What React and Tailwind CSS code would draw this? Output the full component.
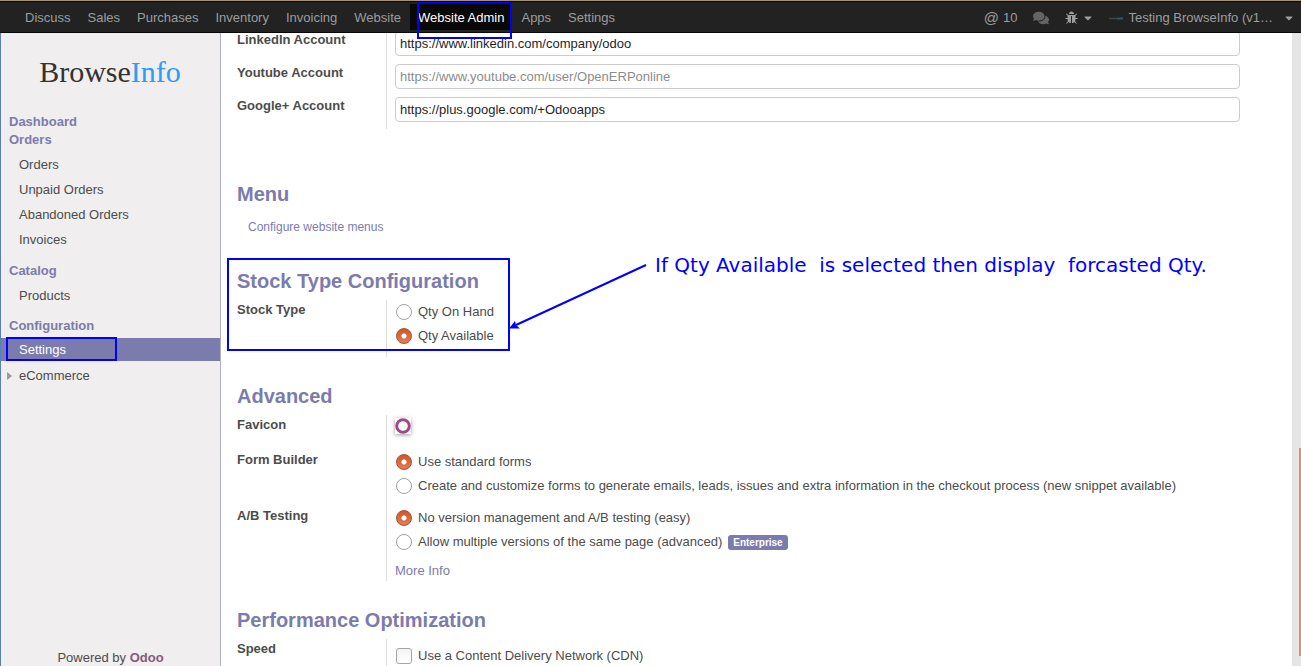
import { FaCaretDown, FaComments } from "react-icons/fa";

const navItems = ["Discuss", "Sales", "Purchases", "Inventory", "Invoicing", "Website", "Website Admin", "Apps", "Settings"];

function BugIcon() {
  return (
    <svg viewBox="0 0 1664 1792" className="h-[14px] w-[13px]" fill="currentColor" aria-hidden="true">
      <path d="M1632 960q0 26-19 45t-45 19h-224q0 171-67 290l208 209q19 19 19 45t-19 45q-18 19-45 19t-45-19l-198-197q-5 5-15 13t-42 28.500-65 36.500-82 29-97 13v-896h-128v896q-51 0-101.500-13.500t-87-33-66-39-43.500-32.500l-15-14-183 207q-20 21-48 21-24 0-43-16-19-18-20.500-44.500t15.500-46.500l202-227q-58-114-58-274h-224q-26 0-45-19t-19-45 19-45 45-19h224v-294l-173-173q-19-19-19-45t19-45 45-19 45 19l173 173h844l173-173q19-19 45-19t45 19 19 45-19 45l-173 173v294h224q26 0 45 19t19 45zm-480-576h-640q0-133 93.500-226.500t226.500-93.500 226.500 93.500 93.500 226.500z" />
    </svg>
  );
}

function NavBar() {
  return (
    <header className="relative z-10 h-[33px] shrink-0 border-t border-[#a8946a] bg-[#222222]">
      <div className="flex h-full items-center justify-between border-y border-[#060606] pr-1.5 pl-[17px] text-[#9d9d9d]">
        <nav className="flex h-full items-center gap-px">
          {navItems.map((item) => {
            const active = item === "Website Admin";
            return (
              <a
                key={item}
                href={"#" + item.toLowerCase().replace(" ", "-")}
                className={
                  active
                    ? "relative flex h-[26px] items-center bg-[#080808] px-2 pt-1.5 pb-1 text-white"
                    : "flex h-[26px] items-center px-2 pt-1.5 pb-1"
                }
              >
                {item}
                {active && <span className="pointer-events-none absolute -top-0.5 left-[7px] h-[37px] w-[95px] border-2 border-[#0000ff]" />}
              </a>
            );
          })}
        </nav>
        <div className="flex items-center pt-0.5">
          <button type="button" aria-label="Mentions" className="mr-4 flex items-center gap-1">
            <span className="text-[15px] leading-4">@</span>
            <span>10</span>
          </button>
          <button type="button" aria-label="Conversations" className="mr-4">
            <FaComments className="size-4 text-[#646464]" />
          </button>
          <button type="button" aria-label="Debug" className="mr-[14px] flex items-center gap-1">
            <BugIcon />
            <FaCaretDown className="h-3 w-3" />
          </button>
          <button type="button" className="flex items-center gap-1">
            <svg viewBox="0 0 16 3" className="h-[3px] w-4" aria-hidden="true">
              <path d="M1 1.500H9" stroke="#454545" strokeWidth="1.4" />
              <path d="M9 1.500H15" stroke="#2f566f" strokeWidth="2" />
            </svg>
            <span className="mr-1.5">Testing BrowseInfo (v1…</span>
            <FaCaretDown className="h-3 w-3" />
          </button>
        </div>
      </div>
    </header>
  );
}

function MenuTitle({ children }) {
  return (
    <a href="#menu" className="block px-[9px] leading-[18px] font-bold text-[#7c7bad]">
      {children}
    </a>
  );
}

function MenuLink({ children }) {
  return (
    <a href="#page" className="block px-[19px] leading-[25px]">
      {children}
    </a>
  );
}

function Sidebar() {
  return (
    <aside className="flex w-[221px] shrink-0 flex-col border-r border-l border-r-[#afafb6] border-l-[#5b7fb8] bg-[#f0eeee]">
      <div className="-ml-px pt-5 text-center font-[Liberation_Serif,serif] text-[30px] leading-[38px] text-[#333333]">
        Browse<span className="text-[#2a9df4]">Info</span>
      </div>
      <nav className="-ml-px pt-[22px]">
        <MenuTitle>Dashboard</MenuTitle>
        <MenuTitle>Orders</MenuTitle>
        <div className="pt-[3px] pb-2.5">
          <MenuLink>Orders</MenuLink>
          <MenuLink>Unpaid Orders</MenuLink>
          <MenuLink>Abandoned Orders</MenuLink>
          <MenuLink>Invoices</MenuLink>
        </div>
        <MenuTitle>Catalog</MenuTitle>
        <div className="pt-[3px] pb-[9px]">
          <MenuLink>Products</MenuLink>
        </div>
        <MenuTitle>Configuration</MenuTitle>
        <div className="pt-[3px]">
          <a href="#settings" className="relative ml-px block bg-[#7c7bad] pl-[18px] leading-[23px] text-white">
            Settings
            <span className="pointer-events-none absolute -top-px left-[5px] h-6 w-[111px] border-2 border-[#0000ff]" />
          </a>
          <a href="#ecommerce" className="flex items-center pt-0.5 pl-[7px] leading-[25px]">
            <svg viewBox="0 0 5 8" className="mr-[7px] h-2 w-[5px]" fill="#999999" aria-hidden="true">
              <path d="M0 0L5 4L0 8Z" />
            </svg>
            eCommerce
          </a>
        </div>
      </nav>
      <footer className="mt-auto text-center leading-4">
        Powered by{" "}
        <a href="#odoo" className="font-bold text-[#875a7b]">
          Odoo
        </a>
      </footer>
    </aside>
  );
}

function Heading({ children }) {
  return <h2 className="h-10 text-[20px] leading-[42px] font-bold text-[#7c7bad]">{children}</h2>;
}

function Row({ label, htmlFor, className, children }) {
  return (
    <div className="flex">
      {htmlFor ? (
        <label htmlFor={htmlFor} className="w-[149px] shrink-0 leading-5 font-bold">
          {label}
        </label>
      ) : (
        <div className="w-[149px] shrink-0 leading-5 font-bold">{label}</div>
      )}
      <div className={"min-w-0 flex-1 border-l border-[#dddddd] pl-2 " + className}>{children}</div>
    </div>
  );
}

function UrlRow({ id, label, ...rest }) {
  return (
    <Row label={label} htmlFor={id} className="h-[33px] pt-px">
      <input
        id={id}
        type="text"
        className="block h-[25px] w-full rounded border border-[#cccccc] bg-white px-1 text-[13px] text-[#1f1f1f] placeholder:text-[#8c8c8c] focus:outline-none"
        {...rest}
      />
    </Row>
  );
}

function Radio({ name, checked, children }) {
  return (
    <label className="flex h-6 items-center">
      <input
        type="radio"
        name={name}
        defaultChecked={checked}
        className="mr-1.5 ml-px size-4 shrink-0 appearance-none rounded-full border border-[#a3a3a3] bg-white checked:border-[#a9502f] checked:bg-[radial-gradient(circle,#ffffff_0_2px,transparent_3px),linear-gradient(#cf5727,#e07f58)]"
      />
      {children}
    </label>
  );
}

function Settings() {
  return (
    <main className="min-w-0 flex-1 overflow-hidden bg-white pr-[52px] pl-4">
      <section className="-mt-[3px] pb-11">
        <UrlRow id="linkedin" label="LinkedIn Account" defaultValue="https://www.linkedin.com/company/odoo" />
        <UrlRow id="youtube" label="Youtube Account" placeholder="https://www.youtube.com/user/OpenERPonline" />
        <UrlRow id="google" label="Google+ Account" defaultValue="https://plus.google.com/+Odooapps" />
      </section>

      <section className="pb-[19px]">
        <Heading>Menu</Heading>
        <a href="#menus" className="block pl-[11px] text-[12px] leading-[28px] text-[#7c7bad]">
          Configure website menus
        </a>
      </section>

      <section className="relative pb-[18px]">
        <Heading>Stock Type Configuration</Heading>
        <Row label="Stock Type" className="h-[57px]">
          <Radio name="stock">Qty On Hand</Radio>
          <Radio name="stock" checked>Qty Available</Radio>
        </Row>
        <div className="pointer-events-none absolute -top-0.5 -left-2.5 flex items-start">
          <div className="h-[93px] w-[283px] border-2 border-[#0000ff]" />
          <svg viewBox="0 0 137 93" className="h-[93px] w-[137px]" aria-hidden="true">
            <path d="M136 7L6 67" stroke="#0000ff" strokeWidth="2" />
            <path d="M-1 70.500L5 63L6 67L10 70.500Z" fill="#0000ff" />
          </svg>
          <p className="pl-2 font-[DejaVu_Sans,sans-serif] text-[20px] leading-[14px] whitespace-pre text-[#0000ff]">
            If Qty Available  is selected then display  forcasted Qty.
          </p>
        </div>
      </section>

      <section className="pb-[18px]">
        <Heading>Advanced</Heading>
        <Row label="Favicon" className="h-[35px] pt-[3px]">
          <svg viewBox="0 0 16 16" className="size-4 bg-white shadow-[0_1px_4px_rgba(0,0,0,0.4)]" role="img" aria-label="Favicon">
            <circle cx="8" cy="8" r="6.300" fill="none" stroke="#a24689" strokeWidth="3" />
          </svg>
        </Row>
        <Row label="Form Builder" className="pb-2">
          <Radio name="forms" checked>Use standard forms</Radio>
          <Radio name="forms">
            Create and customize forms to generate emails, leads, issues and extra information in the checkout process (new snippet available)
          </Radio>
        </Row>
        <Row label="A/B Testing" className="h-[75px]">
          <Radio name="ab" checked>No version management and A/B testing (easy)</Radio>
          <Radio name="ab">
            Allow multiple versions of the same page (advanced)
            <span className="ml-1.5 rounded-[3px] bg-[#7c7bad] px-[5px] text-[10px] leading-[15px] font-bold text-white">Enterprise</span>
          </Radio>
          <a href="#more" className="inline-block pt-2 leading-[18px] text-[#7c7bad]">More Info</a>
        </Row>
      </section>

      <section>
        <Heading>Performance Optimization</Heading>
        <Row label="Speed" className="h-10 pt-[5px]">
          <label className="flex h-6 items-center">
            <input
              type="checkbox"
              className="mr-1.5 ml-px size-4 shrink-0 appearance-none rounded-[3px] border border-[#a3a3a3] bg-linear-to-b from-[#f4f4f4] to-white"
            />
            Use a Content Delivery Network (CDN)
          </label>
        </Row>
      </section>
    </main>
  );
}

export default function App() {
  return (
    <div className="flex h-screen flex-col overflow-hidden font-[Liberation_Sans,Arial,sans-serif] text-[13px] text-[#4c4c4c]">
      <NavBar />
      <div className="flex min-h-0 flex-1">
        <Sidebar />
        <Settings />
        <div className="flex w-[9px] shrink-0 flex-col items-end justify-end bg-[#e5e5e5] pb-[10px]">
          <div className="h-1/3 w-0.5 bg-[#f08763]" />
        </div>
      </div>
    </div>
  );
}
